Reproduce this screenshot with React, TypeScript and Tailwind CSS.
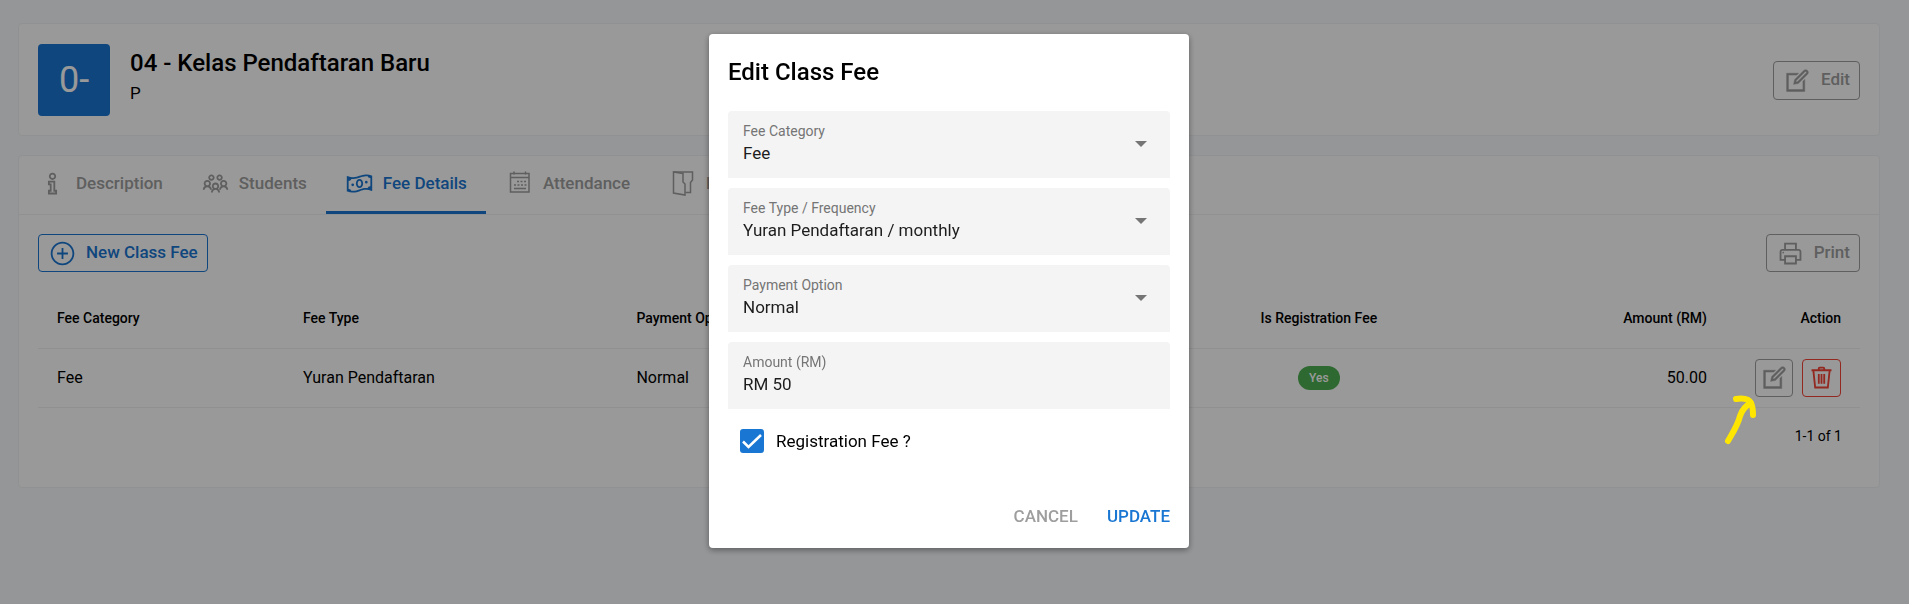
import { clsx } from "clsx";
import React from "react";
import {
  LiaEditSolid,
  LiaInfoSolid,
  LiaMoneyBillWaveSolid,
  LiaPlusCircleSolid,
  LiaPrintSolid,
  LiaTrashSolid,
  LiaUsersSolid,
} from "react-icons/lia";

const CalendarIcon = () => (
  <svg viewBox="0 0 29 29" className="size-[29px]" fill="none" stroke="currentColor" strokeWidth="1.5">
    <path d="M5.500 4.500h18.500v18.500h-18.500z" />
    <path d="M5.500 8.500h18.500M9 2.500v3M20.500 2.500v3M9 19.500h12" />
    <path d="M12 12.500h9.500M9 16h12.500" strokeDasharray="2 1.500" />
  </svg>
);

const DoorIcon = () => (
  <svg viewBox="0 0 29 29" className="size-[29px]" fill="none" stroke="currentColor" strokeWidth="1.5">
    <path d="M5.500 3h19v8l-2 2.500v10h-5" />
    <path d="M5.500 3v21l11.500 2v-11l-2-2v-8.500z" />
  </svg>
);

const tabs = [
  { label: "Description", icon: <LiaInfoSolid className="size-[29px]" /> },
  { label: "Students", icon: <LiaUsersSolid className="size-[29px]" /> },
  { label: "Fee Details", icon: <LiaMoneyBillWaveSolid className="size-[29px]" />, active: true },
  { label: "Attendance", icon: <CalendarIcon /> },
  { label: "Report", icon: <DoorIcon /> },
];

const selects = [
  { id: "fee-category", label: "Fee Category", value: "Fee" },
  { id: "fee-type", label: "Fee Type / Frequency", value: "Yuran Pendaftaran / monthly" },
  { id: "payment-option", label: "Payment Option", value: "Normal" },
];

const ClassHeader = () => {
  return (
    <section className="flex items-center justify-between rounded border border-[#f0f2f4] bg-white px-[19px] pt-5 pb-[19px]">
      <div className="flex gap-5">
        <div className="flex size-[72px] items-center justify-center rounded bg-[#1976d2] text-4xl text-white">
          0-
        </div>
        <div className="pt-[3px]">
          <h1 className="text-2xl font-medium">04 - Kelas Pendaftaran Baru</h1>
          <p className="text-[17px] leading-7">P</p>
        </div>
      </div>
      <button className="flex h-[39px] items-center gap-[9px] rounded border border-[#9e9e9e] px-[9px] text-[17px] font-medium text-[#9e9e9e]">
        <LiaEditSolid className="size-[29px] stroke-[0.5]" />
        Edit
      </button>
    </section>
  );
};

const FeeTable = () => {
  return (
    <table className="mt-[17px] w-full table-fixed text-left">
      <colgroup>
        <col className="w-[13.5%]" />
        <col className="w-[18.3%]" />
        <col className="w-[31%]" />
        <col className="w-[15%]" />
        <col />
        <col className="w-[134px]" />
      </colgroup>
      <thead>
        <tr className="h-[59px] border-b border-[#f1f1f1] text-sm">
          <th className="px-[19px] font-medium">Fee Category</th>
          <th className="px-[19px] font-medium">Fee Type</th>
          <th className="px-[19px] font-medium">Payment Option</th>
          <th className="px-[19px] text-center font-medium">Is Registration Fee</th>
          <th className="px-[19px] text-right font-medium">Amount (RM)</th>
          <th className="px-[19px] text-right font-medium">Action</th>
        </tr>
      </thead>
      <tbody>
        <tr className="h-[59px] border-b border-[#f1f1f1] text-base">
          <td className="px-[19px]">Fee</td>
          <td className="px-[19px]">Yuran Pendaftaran</td>
          <td className="px-[19px]">Normal</td>
          <td className="px-[19px]">
            <div className="flex justify-center">
              <span className="h-6 rounded-full bg-[#4caf50] px-[11px] text-xs leading-6 font-medium text-white">
                Yes
              </span>
            </div>
          </td>
          <td className="px-[19px] text-right">50.00</td>
          <td className="px-[19px]">
            <div className="flex justify-end gap-[9px]">
              <button
                aria-label="Edit fee"
                className="flex size-[38px] shrink-0 items-center justify-center rounded border border-[#9e9e9e] text-[#9e9e9e]"
              >
                <LiaEditSolid className="size-[29px] stroke-[0.5]" />
              </button>
              <button
                aria-label="Delete fee"
                className="flex h-[38px] w-[39px] shrink-0 items-center justify-center rounded border border-[#f44336] text-[#f44336]"
              >
                <LiaTrashSolid className="size-[29px]" />
              </button>
            </div>
          </td>
        </tr>
      </tbody>
    </table>
  );
};

const ClassDetails = () => {
  return (
    <section className="rounded border border-[#f0f2f4] bg-white">
      <nav className="flex border-b border-[#f0f2f4]">
        {tabs.map((tab) => (
          <button
            key={tab.label}
            className={clsx(
              "flex h-[58px] items-center gap-[9px] border-b-3 px-[19px] text-[17px] font-medium",
              tab.active ? "border-[#1976d2] text-[#1976d2]" : "border-transparent text-[#9e9e9e]"
            )}
          >
            {tab.icon}
            {tab.label}
          </button>
        ))}
      </nav>
      <div className="px-[19px] pt-[19px]">
        <div className="flex justify-between">
          <button className="flex h-[38px] items-center gap-[9px] rounded border border-[#1976d2] px-[9px] text-[17px] font-medium text-[#1976d2]">
            <LiaPlusCircleSolid className="size-[29px]" />
            New Class Fee
          </button>
          <button className="flex h-[38px] items-center gap-[9px] rounded border border-[#9e9e9e] px-[9px] text-[17px] font-medium text-[#9e9e9e]">
            <LiaPrintSolid className="size-[29px]" />
            Print
          </button>
        </div>
        <FeeTable />
        <p className="px-[18px] pt-[18px] pb-[41px] text-right text-sm">1-1 of 1</p>
      </div>
    </section>
  );
};

const EditDialog = () => {
  return (
    <form
      role="dialog"
      aria-labelledby="dialog-title"
      className="w-[480px] rounded bg-white px-[19px] pt-5 pb-3 shadow-[0_2px_6px_rgba(0,0,0,0.4)]"
    >
      <h2 id="dialog-title" className="text-2xl leading-9 font-medium">
        Edit Class Fee
      </h2>
      <div className="mt-[21px] flex flex-col gap-2.5">
        {selects.map((field) => (
          <div key={field.id} className="relative h-[67px] rounded-t bg-[#f4f4f4] pt-2.5">
            <label htmlFor={field.id} className="block px-[15px] text-sm text-[#757575]">
              {field.label}
            </label>
            <select
              id={field.id}
              className="block w-full appearance-none px-[15px] text-[17px] leading-6 text-[#1d1d1d] outline-none"
            >
              <option>{field.value}</option>
            </select>
            <svg viewBox="0 0 12 6" className="pointer-events-none absolute top-[30px] right-[23px] w-3 fill-[#757575]">
              <path d="M0 0h12L6 6z" />
            </svg>
          </div>
        ))}
        <div className="h-[67px] rounded-t bg-[#f4f4f4] pt-2.5">
          <label htmlFor="amount" className="block px-[15px] text-sm text-[#757575]">
            Amount (RM)
          </label>
          <input
            id="amount"
            defaultValue="RM 50"
            className="block w-full px-[15px] text-[17px] leading-6 text-[#1d1d1d] outline-none"
          />
        </div>
      </div>
      <label className="mt-5 ml-3 flex items-center gap-3 text-[17px] leading-6">
        <span className="grid size-6">
          <input
            type="checkbox"
            defaultChecked
            className="col-start-1 row-start-1 size-6 appearance-none rounded-[3px] bg-[#1976d2]"
          />
          <svg
            viewBox="0 0 24 24"
            className="pointer-events-none col-start-1 row-start-1 size-6"
            fill="none"
            stroke="white"
            strokeWidth="2.500"
          >
            <path d="M3 12.500l5.500 5.500L21 6" />
          </svg>
        </span>
        Registration Fee ?
      </label>
      <div className="mt-[45px] flex justify-end gap-[29px] text-[17px] font-medium">
        <button type="button" className="h-[38px] text-[#9e9e9e]">
          CANCEL
        </button>
        <button type="button" className="h-[38px] text-[#1976d2]">
          UPDATE
        </button>
      </div>
    </form>
  );
};

const App = () => {
  return (
    <div className="min-h-screen bg-[#f8fafd] font-[Roboto,sans-serif] text-black">
      <main className="flex flex-col gap-[19px] pt-[23px] pr-[29px] pl-[18px]">
        <ClassHeader />
        <ClassDetails />
      </main>
      <div className="fixed inset-0 flex items-start justify-center bg-black/40 pt-[34px] pr-[11px]">
        <EditDialog />
      </div>
      {/* hand drawn pointer to the row's edit button */}
      <svg
        viewBox="0 0 40 56"
        className="pointer-events-none fixed top-[392px] right-[149px] w-10"
        fill="none"
        stroke="#ffe600"
        strokeWidth="6"
        strokeLinecap="round"
        strokeLinejoin="round"
      >
        <path d="M8 49C12 42 18 33 20 24C22 18 25 14 31 11" />
        <path d="M16 7C23 6 29 7 31 11C33 15 33 19 33 23" />
      </svg>
    </div>
  );
};

export default App;
